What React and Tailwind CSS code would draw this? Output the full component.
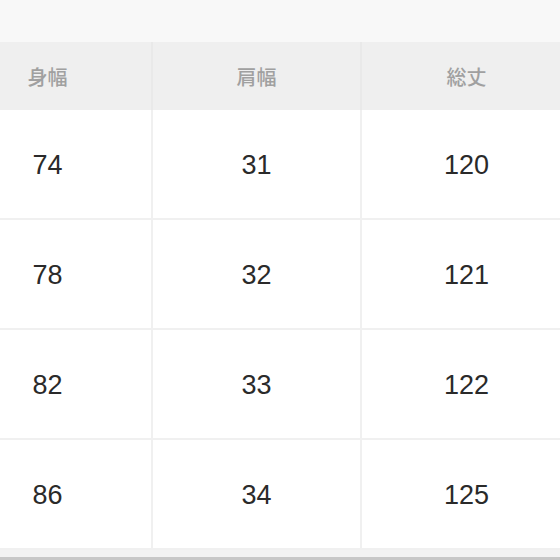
const headers = ['身幅', '肩幅', '総丈']

const rows = [
  ['74', '31', '120'],
  ['78', '32', '121'],
  ['82', '33', '122'],
  ['86', '34', '125'],
]

export default function App() {
  return (
    <div className="w-[560px] h-[560px] overflow-hidden bg-white flex flex-col" style={{ fontFamily: '"Liberation Sans", "Noto Sans CJK JP", sans-serif' }}>
      <div className="h-[42px] bg-[#f8f8f8] shrink-0" />
      <div className="-ml-[56px] w-[627px] shrink-0">
        <div className="grid grid-cols-3 h-[68px] bg-[#efefef]">
          {headers.map((h, i) => (
            <div
              key={h}
              className={`flex items-center justify-center pt-[1px] text-[20px] font-medium text-[#a0a0a0] ${i < 2 ? 'border-r-2 border-[#e9e9e9]' : ''}`}
              style={{ fontFamily: '"Noto Sans CJK JP", sans-serif' }}
            >
              {h}
            </div>
          ))}
        </div>
        {rows.map((r, ri) => (
          <div key={ri} className="grid grid-cols-3 h-[110px] border-b-2 border-[#f0f0f0]">
            {r.map((v, i) => (
              <div
                key={i}
                className={`flex items-center justify-center pt-[3px] text-[27px] text-[#2a2a2a] ${i < 2 ? 'border-r-2 border-[#f0f0f0]' : ''}`}
              >
                {v}
              </div>
            ))}
          </div>
        ))}
      </div>
      <div className="h-[7px] bg-[#f3f3f3] shrink-0" />
      <div className="h-[3px] bg-[#c8c8c8] shrink-0" />
    </div>
  )
}
